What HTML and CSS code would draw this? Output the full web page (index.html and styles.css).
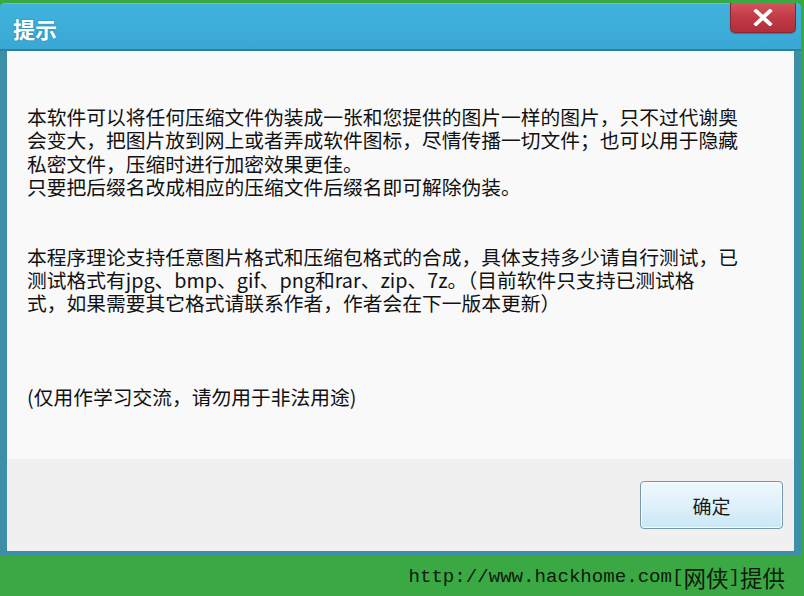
FILE: index.html
```html
<!DOCTYPE html>
<html lang="zh-CN">
<head>
  <meta charset="UTF-8" />
  <title>提示</title>
  <link rel="stylesheet" href="styles.css">
</head>
<body>
  <div class="window">
    <!-- Title bar -->
    <div class="titlebar">
      <span class="title">提示</span>
      <button class="close-btn" aria-label="关闭">
        <svg width="20" height="17" viewBox="0 0 20 17">
          <path d="M3 2 L17 15 M17 2 L3 15" stroke="#ffffff" stroke-width="3.8" stroke-linecap="square" fill="none"/>
        </svg>
      </button>
    </div>

    <!-- Message -->
    <div class="content">
      <p class="para first">本软件可以将任何压缩文件伪装成一张和您提供的图片一样的图片，只不过代谢奥<br>会变大，把图片放到网上或者弄成软件图标，尽情传播一切文件；也可以用于隐藏<br>私密文件，压缩时进行加密效果更佳。<br>只要把后缀名改成相应的压缩文件后缀名即可解除伪装。</p>
      <p class="para second">本程序理论支持任意图片格式和压缩包格式的合成，具体支持多少请自行测试，已<br>测试格式有jpg、bmp、gif、png和rar、zip、7z。（目前软件只支持已测试格<br>式，如果需要其它格式请联系作者，作者会在下一版本更新）</p>
      <p class="para">(仅用作学习交流，请勿用于非法用途)</p>
    </div>

    <!-- Buttons -->
    <div class="actions">
      <button class="ok-btn">确定</button>
    </div>
  </div>

  <div class="footer">
    <span class="mono">http://www.hackhome.com[</span><span class="cjk">网侠</span><span class="mono">]</span><span class="cjk">提供</span>
  </div>
</body>
</html>
```

FILE: styles.css
```css
body {
  margin: 0;
  background: #3aa943;
  font-family: "Noto Sans CJK SC", "Noto Sans", sans-serif;
  color: #111111;
  width: 804px;
  height: 596px;
  overflow: hidden;
}

.window {
  margin-top: 3px;
  width: 801px;
  box-sizing: border-box;
  background: #3d8fa7;
  padding: 0 7px 5px 7px;
  border-radius: 5px 5px 0 0;
}

/* Title bar */
.titlebar {
  display: flex;
  align-items: flex-start;
  height: 45px;
  margin: 0 -7px;
  background: linear-gradient(#41b2dd, #39a8d4);
  border-bottom: 2px solid #2f8099;
  border-radius: 5px 5px 0 0;
  border-top: 1px solid #5fc0e2;
  box-sizing: content-box;
}

.title {
  color: #ffffff;
  font-size: 22px;
  font-weight: bold;
  line-height: 22px;
  margin: 13px 0 0 13px;
  text-shadow: 0 0 2px rgba(0, 60, 90, 0.4);
}

.close-btn {
  margin: -1px 5px 0 auto;
  width: 66px;
  height: 30px;
  padding: 0;
  border: 1px solid #8d2631;
  border-top: none;
  border-radius: 0 0 5px 5px;
  background: linear-gradient(#d6555f, #c13a45 50%, #b02f3a);
  display: flex;
  align-items: center;
  justify-content: center;
  box-shadow: 0 1px 1px rgba(0, 0, 0, 0.25);
}

/* Message area */
.content {
  height: 408px;
  box-sizing: border-box;
  background: #f9f9f9;
  padding: 54px 20px 0 20px;
  font-size: 19.75px;
  line-height: 23.3px;
}

.para {
  margin: 0;
  white-space: nowrap;
}

.para.first {
  margin-bottom: 46.6px;
}

.para.second {
  margin-bottom: 69.9px;
}

/* Button panel */
.actions {
  height: 92px;
  box-sizing: border-box;
  background: #f0f0f0;
  display: flex;
  align-items: center;
  justify-content: flex-end;
  padding-right: 11px;
}

.ok-btn {
  width: 143px;
  height: 48px;
  border: 1px solid #7598aa;
  border-radius: 4px;
  background: linear-gradient(#eef8fd, #dff1fa 50%, #c9e7f6);
  box-shadow: inset 0 0 0 1px #f6fbfe;
  font-family: "Noto Sans CJK SC", sans-serif;
  font-size: 19px;
  color: #1a1a1a;
  padding: 0;
}

/* Credit strip */
.footer {
  display: flex;
  justify-content: flex-end;
  align-items: center;
  height: 41px;
  padding-right: 19px;
  color: #0d1a0d;
}

.mono {
  font-family: "Liberation Mono", monospace;
  font-size: 19.1px;
}

.cjk {
  font-family: "Noto Sans CJK SC", sans-serif;
  font-size: 22.5px;
}
```
